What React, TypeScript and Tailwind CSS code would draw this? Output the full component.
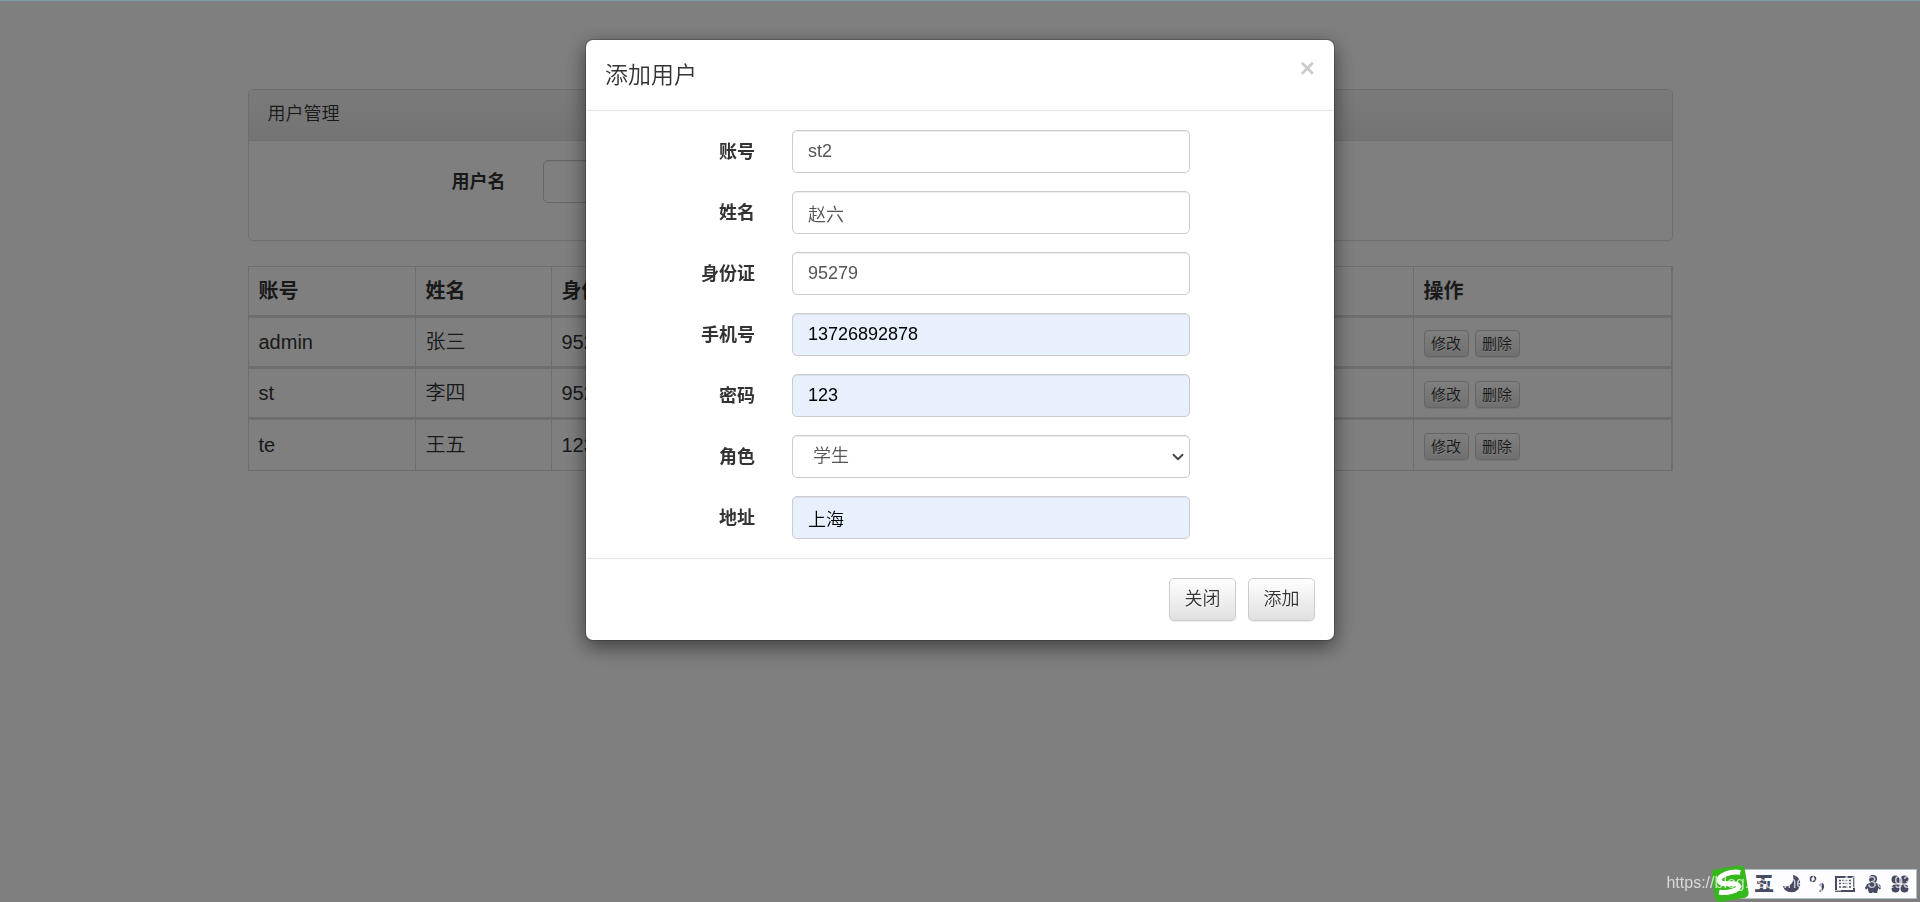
import React, { useState } from 'react';
import { ChevronDown } from 'lucide-react';
import clsx from 'clsx';

const users = [
	{ account: 'admin', name: '张三', idCard: '9527' },
	{ account: 'st', name: '李四', idCard: '9528' },
	{ account: 'te', name: '王五', idCard: '1234' },
];

const fields = [
	{ id: 'account', label: '账号', value: 'st2', autofilled: false },
	{ id: 'name', label: '姓名', value: '赵六', autofilled: false },
	{ id: 'idCard', label: '身份证', value: '95279', autofilled: false },
	{ id: 'phone', label: '手机号', value: '13726892878', autofilled: true },
	{ id: 'password', label: '密码', value: '123', autofilled: true },
	{ id: 'role', label: '角色', value: '学生', autofilled: false },
	{ id: 'address', label: '地址', value: '上海', autofilled: true },
];

const controlClass =
	'h-[43px] w-full rounded-[5px] border border-[#ccc] px-[15px] font-[350] shadow-[inset_0_1px_1px_rgba(0,0,0,0.075)] outline-none';

const buttonClass =
	'border border-[#ccc] bg-linear-to-b from-white to-[#e0e0e0] font-[350] text-[#333] shadow-[inset_0_1px_0_rgba(255,255,255,0.15),0_1px_1px_rgba(0,0,0,0.075)] [text-shadow:0_1px_0_#fff]';

const smallButton = 'h-[27px] w-[45px] rounded-[4px] text-[15px] leading-[25px]';
const largeButton = 'h-[43px] w-[67px] rounded-[5px] text-[18px]';

const SearchPanel = () => (
	<section className="rounded-[5px] border border-[#ddd] shadow-[0_1px_2px_rgba(0,0,0,0.05)]">
		<h2 className="rounded-t-[4px] border-b border-[#ddd] bg-linear-to-b from-[#f5f5f5] to-[#e8e8e8] px-[19px] pt-[11px] pb-[13px] text-[18px] leading-[26px] font-[350]">
			用户管理
		</h2>
		<form className="flex items-center px-[19px] pt-[19px] pb-[37px]">
			<label htmlFor="search" className="w-[256px] pt-[2px] pr-[18px] text-right text-[18px] font-bold">
				用户名
			</label>
			<div className="ml-[19px] w-[300px]">
				<input id="search" className={clsx(controlClass, 'bg-white')} />
			</div>
		</form>
	</section>
);

const UserTable = () => (
	<table className="mt-[25px] w-full table-fixed border-separate border-spacing-0 text-[20px] leading-[30px]">
		<colgroup>
			<col className="w-[167px]" />
			<col className="w-[136px]" />
			<col />
			<col className="w-[260px]" />
		</colgroup>
		<thead>
			<tr className="h-[52px] text-left">
				{['账号', '姓名', '身份证', '操作'].map((title) => (
					<th key={title} className="border-t border-b-[3px] border-l border-[#ddd] px-[10px] font-bold last:border-r-2">
						{title}
					</th>
				))}
			</tr>
		</thead>
		<tbody>
			{users.map((user) => (
				<tr key={user.account} className="group h-[51px] font-[350]">
					{[user.account, user.name, user.idCard].map((value) => (
						<td key={value} className="border-b-[3px] border-l border-[#ddd] px-[10px] group-last:border-b">
							{value}
						</td>
					))}
					<td className="border-r-2 border-b-[3px] border-l border-[#ddd] px-[10px] group-last:border-b">
						<div className="flex gap-[6px] pt-[2px]">
							<button type="button" className={clsx(buttonClass, smallButton)}>修改</button>
							<button type="button" className={clsx(buttonClass, smallButton)}>删除</button>
						</div>
					</td>
				</tr>
			))}
		</tbody>
	</table>
);

const AddUserModal = () => {
	const [values, setValues] = useState<Record<string, string>>(
		Object.fromEntries(fields.map((f) => [f.id, f.value]))
	);
	const update = (id: string, value: string) => setValues((prev) => ({ ...prev, [id]: value }));

	return (
		<div role="dialog" aria-labelledby="modal-title" className="mx-auto mt-[38px] w-full max-w-[750px] rounded-[8px] border border-black/20 bg-white bg-clip-padding shadow-[0_6px_19px_rgba(0,0,0,0.5)]">
			<header className="flex items-start justify-between border-b border-[#e5e5e5] p-[19px]">
				<h4 id="modal-title" className="text-[23px] leading-8 font-[350]">添加用户</h4>
				<button type="button" aria-label="Close" className="text-[26px] leading-[18px] font-bold text-black opacity-20">
					×
				</button>
			</header>

			<form className="flex flex-col gap-[18px] py-[19px] text-[18px]">
				{fields.map((field) => (
					<div key={field.id} className="grid grid-cols-12 items-center">
						<label htmlFor={field.id} className="col-span-3 pt-[2px] pr-[18px] text-right font-bold">
							{field.label}
						</label>
						<div className="relative col-span-7 px-[19px]">
							{field.id === 'role' ? (
								<>
									<select
										id={field.id}
										value={values[field.id]}
										onChange={(e) => update(field.id, e.target.value)}
										className={clsx(controlClass, 'appearance-none bg-white pl-[20px] text-[#555]')}
									>
										<option>学生</option>
									</select>
									<ChevronDown className="pointer-events-none absolute top-[13px] right-[22px] size-[18px] text-[#444]" strokeWidth={2.5} />
								</>
							) : (
								<input
									id={field.id}
									value={values[field.id]}
									onChange={(e) => update(field.id, e.target.value)}
									className={clsx(controlClass, field.autofilled ? 'bg-[#e8f0fe] text-black' : 'bg-white text-[#555]')}
								/>
							)}
						</div>
					</div>
				))}
			</form>

			<footer className="flex justify-end gap-3 border-t border-[#e5e5e5] p-[19px]">
				<button type="button" className={clsx(buttonClass, largeButton)}>关闭</button>
				<button type="button" className={clsx(buttonClass, largeButton)}>添加</button>
			</footer>
		</div>
	);
};

// floating input method bar in the corner of the screen
const InputMethodBar = () => (
	<div className="fixed right-[3px] bottom-[3px] z-20 flex h-[30px] items-center border border-[#afc0cc] bg-[#fdfdff] pr-[7px] text-[#464b63]">
		<svg viewBox="0 0 38 38" className="-my-1 -ml-2 size-[38px]">
			<g transform="rotate(-9 19 19)">
				<rect x="1" y="2" width="34" height="33" rx="5" fill="#35b81c" />
				<path d="M30 9C21 6 8 8 8 14c0 6 18 3 18 8 0 5-13 6-20 3" fill="none" stroke="#fff" strokeWidth="5" />
			</g>
		</svg>
		<span className="ml-[4px] w-[21px] text-[20px] leading-5 font-black">五</span>
		<svg viewBox="0 0 18 18" className="ml-[8px] size-[18px]" fill="currentColor">
			<path d="M10 0c5 1 8 5 7 10-1 5-5 8-9 7-4 0-7-2-8-6 6 2 12-3 10-11z" />
		</svg>
		<svg viewBox="0 0 18 18" className="ml-[8px] size-[18px]">
			<circle cx="4" cy="4" r="2.5" fill="none" stroke="currentColor" strokeWidth="1.6" />
			<path d="M12 8c4-1 5 6-1 9l-1-1c2-1 3-3 2-4-2-1-2-3 0-4z" fill="currentColor" />
		</svg>
		<svg viewBox="0 0 20 16" className="ml-[8px] h-4 w-5">
			<rect x="1" y="1" width="18" height="14" fill="none" stroke="currentColor" strokeWidth="2" />
			<path d="M4 4.500h12M4 7.500h12" stroke="currentColor" strokeWidth="1.500" strokeDasharray="2 1.300" />
			<path d="M4 11h2M7.500 11h5M14 11h2" stroke="currentColor" strokeWidth="1.500" />
		</svg>
		<svg viewBox="0 0 16 18" className="ml-[10px] h-[18px] w-4" fill="currentColor">
			<path d="M8 0c3 0 4.500 2 4 4.500 0 1.500-1 2.500-2 3.500 3 0 5 1 6 4 0 2-1 3-2 2l-1-1c0 2 0 3-1 4 1 1 0 1-1 1H9l-1-1-1 1H5c-1 0-2 0-1-1-1-1-1-2-1-4l-1 1c-1 1-2 0-2-2 1-3 3-4 6-4-1-1-2-2-2-3.500C3.500 2 5 0 8 0z" />
		</svg>
		<svg viewBox="0 0 18 18" className="ml-[10px] size-[18px]" fill="currentColor">
			<path d="M8.500 8.500H4.500a4 4 0 1 1 4-4zM9.500 8.500v-4a4 4 0 1 1 4 4zM8.500 9.500v4a4 4 0 1 1-4-4zM9.500 9.500h4a4 4 0 1 1-4 4z" />
		</svg>
	</div>
);

const App = () => {
	return (
		<div className="min-h-screen bg-white font-['Liberation_Sans','Noto_Sans_CJK_SC',sans-serif] text-[#333]">
			<main className="mx-auto max-w-[1463px] px-[19px] pt-[89px]">
				<SearchPanel />
				<UserTable />
			</main>

			<div className="fixed inset-0 z-10 overflow-auto border-t border-[#7b9fa6] bg-black/50">
				<AddUserModal />
			</div>

			<InputMethodBar />
			<span className="fixed right-[8px] bottom-[7px] z-30 text-[16px] leading-6 text-white/70">
				https://blog.csdn.net/qq_41536193
			</span>
		</div>
	);
};

export default App;
